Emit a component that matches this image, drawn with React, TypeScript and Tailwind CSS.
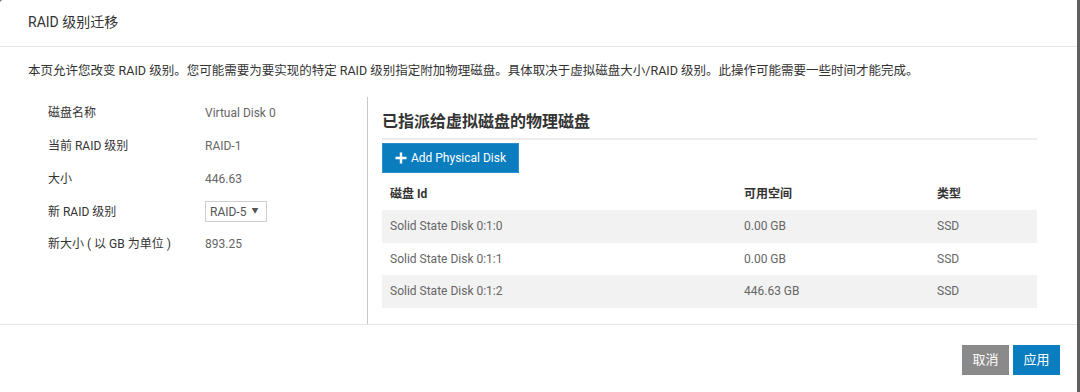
import React from 'react';

const info = [
  { label: '磁盘名称', value: 'Virtual Disk 0' },
  { label: '当前 RAID 级别', value: 'RAID-1' },
  { label: '大小', value: '446.63' },
  { label: '新 RAID 级别', value: 'select' },
  { label: '新大小 ( 以 GB 为单位 )', value: '893.25' },
];

const disks = [
  { id: 'Solid State Disk 0:1:0', space: '0.00 GB', type: 'SSD' },
  { id: 'Solid State Disk 0:1:1', space: '0.00 GB', type: 'SSD' },
  { id: 'Solid State Disk 0:1:2', space: '446.63 GB', type: 'SSD' },
];

function App() {
  return (
    <div
      className="w-[1080px] h-[392px] bg-[#5f5f5f] overflow-hidden"
      style={{ fontFamily: "Roboto, 'Noto Sans CJK SC', sans-serif" }}
    >
      <div className="w-[1077px] h-[392px] bg-white rounded-tl-[3px] flex flex-col text-[#333]">
        {/* Header */}
        <div className="h-[47px] border-b border-[#e6e6e6] flex items-center px-[28px] pb-[2px]">
          <h1 className="text-[14px] text-[#333]">RAID 级别迁移</h1>
        </div>

        {/* Body */}
        <div className="h-[278px] border-b border-[#e6e6e6] flex flex-col">
          <p className="text-[12.5px] text-[#333] px-[28px] mt-[16px] leading-[16px]">
            本页允许您改变 RAID 级别。您可能需要为要实现的特定 RAID 级别指定附加物理磁盘。具体取决于虚拟磁盘大小/RAID 级别。此操作可能需要一些时间才能完成。
          </p>

          <div className="flex mt-[18px] flex-1">
            {/* Left info */}
            <div className="w-[368px] pl-[48px] border-r border-[#c8c8c8]">
              {info.map(row => (
                <div key={row.label} className="flex items-center h-[32.75px] text-[12px]">
                  <div className="w-[157px] text-[#333]">{row.label}</div>
                  {row.value === 'select' ? (
                    <div className="w-[62px] h-[21px] border border-[#cfcfcf] flex items-center pl-[4px] text-[#555]">
                      RAID-5
                      <span className="ml-[5px] text-[7px]">▼</span>
                    </div>
                  ) : (
                    <div className="text-[#666]">{row.value}</div>
                  )}
                </div>
              ))}
            </div>

            {/* Right disks */}
            <div className="flex-1 pl-[14px] pr-[40px] pt-[13px]">
              <h2 className="text-[16px] font-bold text-[#333] leading-[24px] pb-[4px] border-b-2 border-[#ececec]">
                已指派给虚拟磁盘的物理磁盘
              </h2>
              <button className="mt-[3px] h-[30px] w-[137px] bg-[#0a7dbf] text-white text-[12px] flex items-center justify-center gap-[4px] border border-[#2a8fcc]">
                <svg width="12" height="12" viewBox="0 0 12 12">
                  <path d="M6 0.5v11M0.5 6h11" stroke="white" strokeWidth="2.4" />
                </svg>
                Add Physical Disk
              </button>

              <div className="mt-[4px] text-[12px]">
                <div className="flex items-center h-[33px] font-bold text-[#333]">
                  <div className="w-[354px] pl-[8px]">磁盘 Id</div>
                  <div className="w-[193px] pl-[8px]">可用空间</div>
                  <div className="pl-[8px]">类型</div>
                </div>
                {disks.map((d, i) => (
                  <div
                    key={d.id}
                    className={`flex items-center h-[32.5px] text-[#666] ${i % 2 === 0 ? 'bg-[#f2f2f2]' : 'bg-white'}`}
                  >
                    <div className="w-[354px] pl-[8px]">{d.id}</div>
                    <div className="w-[193px] pl-[8px]">{d.space}</div>
                    <div className="pl-[8px]">{d.type}</div>
                  </div>
                ))}
              </div>
            </div>
          </div>
        </div>

        {/* Footer */}
        <div className="flex justify-end items-start pt-[20px] pr-[17px] gap-[4px]">
          <button className="w-[47px] h-[30px] bg-[#8a8a8a] text-white text-[13px]">取消</button>
          <button className="w-[47px] h-[30px] bg-[#0a7dbf] text-white text-[13px]">应用</button>
        </div>
      </div>
    </div>
  );
}

export default App;
